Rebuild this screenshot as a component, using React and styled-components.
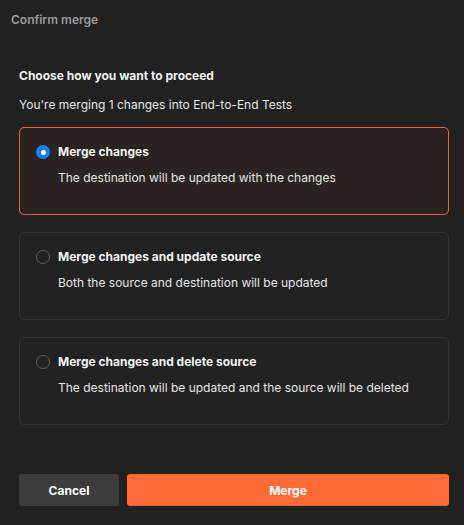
import React, { useState } from "react";
import styled, { createGlobalStyle } from "styled-components";

const Global = createGlobalStyle`
  html, body { margin: 0; padding: 0; background: #212121; }
  body { font-family: Inter, "Noto Sans", sans-serif; -webkit-font-smoothing: antialiased; }
  * { box-sizing: border-box; }
`;

const Dialog = styled.div`
  width: 464px;
  height: 525px;
  background: #212121;
  display: flex;
  flex-direction: column;
`;

const Header = styled.div`
  height: 38px;
  padding: 0 11px;
  display: flex;
  align-items: center;
  color: #9b9b9b;
  font-size: 12px;
  font-weight: 600;
`;

const Body = styled.div`
  flex: 1;
  padding: 30px 15px 0 19px;
  display: flex;
  flex-direction: column;
`;

const Heading = styled.div`
  color: #f2f2f2;
  font-size: 12px;
  font-weight: 700;
  line-height: 16px;
`;

const Sub = styled.div`
  color: #e6e6e6;
  font-size: 12px;
  line-height: 16px;
  margin-top: 13px;
  margin-bottom: 14px;
`;

const Options = styled.div`
  display: flex;
  flex-direction: column;
  gap: 17px;
`;

const Card = styled.label`
  display: block;
  height: 88px;
  padding: 16px 16px 0 16px;
  border-radius: 5px;
  border: 1px solid ${(p) => (p.$selected ? "#e8683d" : "#323232")};
  background: ${(p) => (p.$selected ? "#2a2321" : "#222222")};
  cursor: pointer;
`;

const TitleRow = styled.div`
  display: flex;
  align-items: center;
  gap: 8px;
`;

const Radio = styled.span`
  width: 14px;
  height: 14px;
  border-radius: 50%;
  flex-shrink: 0;
  display: flex;
  align-items: center;
  justify-content: center;
  border: ${(p) => (p.$checked ? "none" : "1.5px solid #5f5f5f")};
  background: ${(p) => (p.$checked ? "#1a7ff0" : "transparent")};
  &::after {
    content: "";
    display: ${(p) => (p.$checked ? "block" : "none")};
    width: 5px;
    height: 5px;
    border-radius: 50%;
    background: #ffffff;
  }
`;

const Title = styled.span`
  color: #f2f2f2;
  font-size: 12px;
  font-weight: 700;
  line-height: 16px;
`;

const Desc = styled.div`
  color: #e6e6e6;
  font-size: 12px;
  line-height: 16px;
  margin-top: 10px;
  padding-left: 22px;
`;

const Footer = styled.div`
  display: flex;
  gap: 8px;
  padding: 0 15px 19px 19px;
`;

const Button = styled.button`
  height: 32px;
  border: none;
  border-radius: 3px;
  font-family: inherit;
  font-size: 12px;
  font-weight: 700;
  color: #ffffff;
  cursor: pointer;
  background: ${(p) => (p.$primary ? "#ff6b36" : "#3c3c3c")};
  ${(p) => (p.$primary ? "flex: 1;" : "width: 100px;")}
`;

const options = [
  { title: "Merge changes", desc: "The destination will be updated with the changes" },
  { title: "Merge changes and update source", desc: "Both the source and destination will be updated" },
  { title: "Merge changes and delete source", desc: "The destination will be updated and the source will be deleted" },
];

export default function App() {
  const [sel, setSel] = useState(0);
  return (
    <>
      <Global />
      <Dialog>
        <Header>Confirm merge</Header>
        <Body>
          <Heading>Choose how you want to proceed</Heading>
          <Sub>You're merging 1 changes into End-to-End Tests</Sub>
          <Options>
            {options.map((o, i) => (
              <Card key={i} $selected={sel === i} onClick={() => setSel(i)}>
                <TitleRow>
                  <Radio $checked={sel === i} />
                  <Title>{o.title}</Title>
                </TitleRow>
                <Desc>{o.desc}</Desc>
              </Card>
            ))}
          </Options>
        </Body>
        <Footer>
          <Button>Cancel</Button>
          <Button $primary>Merge</Button>
        </Footer>
      </Dialog>
    </>
  );
}
